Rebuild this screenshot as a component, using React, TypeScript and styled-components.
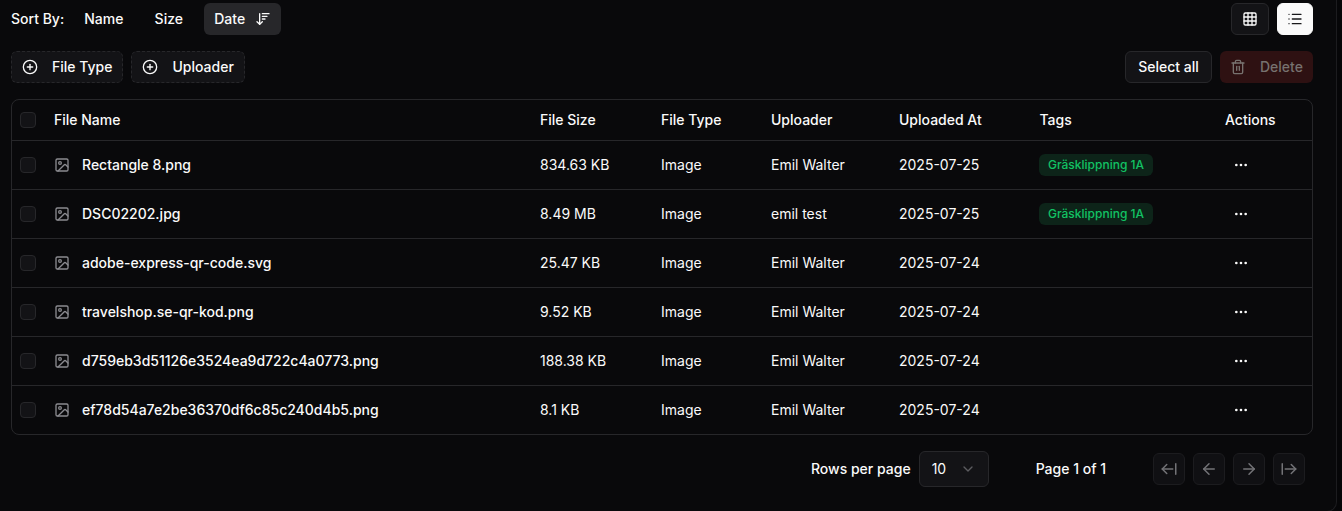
import React from "react"
import styled, { createGlobalStyle } from "styled-components"
import {
  ArrowDownWideNarrow,
  ArrowLeft,
  ArrowLeftFromLine,
  ArrowRight,
  ArrowRightFromLine,
  ChevronDown,
  CirclePlus,
  Ellipsis,
  Grid3x3,
  Image,
  List,
  Trash2,
} from "lucide-react"

const files = [
  { name: "Rectangle 8.png", size: "834.63 KB", uploader: "Emil Walter", date: "2025-07-25", tag: "Gräsklippning 1A" },
  { name: "DSC02202.jpg", size: "8.49 MB", uploader: "emil test", date: "2025-07-25", tag: "Gräsklippning 1A" },
  { name: "adobe-express-qr-code.svg", size: "25.47 KB", uploader: "Emil Walter", date: "2025-07-24" },
  { name: "travelshop.se-qr-kod.png", size: "9.52 KB", uploader: "Emil Walter", date: "2025-07-24" },
  { name: "d759eb3d51126e3524ea9d722c4a0773.png", size: "188.38 KB", uploader: "Emil Walter", date: "2025-07-24" },
  { name: "ef78d54a7e2be36370df6c85c240d4b5.png", size: "8.1 KB", uploader: "Emil Walter", date: "2025-07-24" },
]

const App = () => {
  return (
    <Page>
      <GlobalStyle />
      <Panel>
        <TopBar>
          <SortGroup>
            <SortLabel>Sort By:</SortLabel>
            <SortButton>Name</SortButton>
            <SortButton>Size</SortButton>
            <SortButton $active>
              Date
              <ArrowDownWideNarrow size={16} />
            </SortButton>
          </SortGroup>
          <ViewGroup>
            <ViewButton>
              <Grid3x3 size={16} />
            </ViewButton>
            <ViewButton $active>
              <List size={16} />
            </ViewButton>
          </ViewGroup>
        </TopBar>

        <FilterBar>
          <FilterGroup>
            <FilterButton>
              <CirclePlus size={16} />
              File Type
            </FilterButton>
            <FilterButton>
              <CirclePlus size={16} />
              Uploader
            </FilterButton>
          </FilterGroup>
          <FilterGroup>
            <SelectAllButton>Select all</SelectAllButton>
            <DeleteButton>
              <Trash2 size={16} />
              Delete
            </DeleteButton>
          </FilterGroup>
        </FilterBar>

        <Table>
          <HeaderRow>
            <CheckCell>
              <Checkbox />
            </CheckCell>
            <span>File Name</span>
            <span>File Size</span>
            <span>File Type</span>
            <span>Uploader</span>
            <span>Uploaded At</span>
            <span>Tags</span>
            <span>Actions</span>
          </HeaderRow>
          {files.map((file) => (
            <BodyRow key={file.name}>
              <CheckCell>
                <Checkbox />
              </CheckCell>
              <NameCell>
                <Image size={16} />
                {file.name}
              </NameCell>
              <Cell>{file.size}</Cell>
              <Cell>Image</Cell>
              <Cell>{file.uploader}</Cell>
              <Cell>{file.date}</Cell>
              <Cell>{file.tag && <Tag>{file.tag}</Tag>}</Cell>
              <ActionCell>
                <Ellipsis size={16} />
              </ActionCell>
            </BodyRow>
          ))}
        </Table>

        <Footer>
          <FooterLabel>Rows per page</FooterLabel>
          <RowsSelect>
            10
            <ChevronDown size={16} />
          </RowsSelect>
          <PageText>Page 1 of 1</PageText>
          <PagerGroup>
            <PagerButton>
              <ArrowLeftFromLine size={18} />
            </PagerButton>
            <PagerButton>
              <ArrowLeft size={18} />
            </PagerButton>
            <PagerButton>
              <ArrowRight size={18} />
            </PagerButton>
            <PagerButton>
              <ArrowRightFromLine size={18} />
            </PagerButton>
          </PagerGroup>
        </Footer>
      </Panel>
    </Page>
  )
}

const GlobalStyle = createGlobalStyle`
  html, body {
    margin: 0;
    background: #060608;
    overflow: hidden;
  }
  * {
    box-sizing: border-box;
  }
`
const Page = styled.div`
  width: 1342px;
  height: 511px;
  overflow: hidden;
  font-family: "Inter", sans-serif;
  font-size: 14px;
  line-height: 20px;
  font-weight: 500;
  color: #fafafa;
`
const Panel = styled.div`
  width: 1337px;
  height: 512px;
  padding: 3px 23px 0 11px;
  background: #09090b;
  border-right: 1px solid #1c1c1f;
  border-bottom: 1px solid #1c1c1f;
  border-bottom-right-radius: 10px;
`
const TopBar = styled.div`
  display: flex;
  justify-content: space-between;
  align-items: center;
  height: 32px;
`
const SortGroup = styled.div`
  display: flex;
  align-items: center;
  gap: 11.25px;
`
const SortLabel = styled.span`
  margin-right: -1.25px;
`
const SortButton = styled.button<{ $active?: boolean }>`
  display: flex;
  align-items: center;
  gap: 10px;
  height: 32px;
  padding: 0 10px;
  border: 0;
  border-radius: 6px;
  background: ${(p) => (p.$active ? "#27272a" : "transparent")};
  color: inherit;
  font: inherit;
`
const ViewGroup = styled.div`
  display: flex;
  gap: 8px;
`
const ViewButton = styled.button<{ $active?: boolean }>`
  display: flex;
  align-items: center;
  justify-content: center;
  width: ${(p) => (p.$active ? "36px" : "38px")};
  height: 32px;
  padding: 0;
  border: 1px solid ${(p) => (p.$active ? "#fafafa" : "#27272a")};
  border-radius: 6px;
  background: ${(p) => (p.$active ? "#fafafa" : "#131316")};
  color: ${(p) => (p.$active ? "#18181b" : "#fafafa")};
`
const FilterBar = styled.div`
  display: flex;
  justify-content: space-between;
  align-items: center;
  height: 32px;
  margin-top: 16px;
`
const FilterGroup = styled.div`
  display: flex;
  gap: 8px;
`
const FilterButton = styled.button`
  display: flex;
  align-items: center;
  gap: 14px;
  height: 32px;
  padding: 0 10px;
  border: 1px dashed #27272a;
  border-radius: 6px;
  background: #131316;
  color: inherit;
  font: inherit;
`
const SelectAllButton = styled.button`
  height: 32px;
  width: 87px;
  padding: 0;
  border: 1px solid #27272a;
  border-radius: 6px;
  background: #131316;
  color: inherit;
  font: inherit;
`
const DeleteButton = styled.button`
  display: flex;
  align-items: center;
  gap: 14px;
  width: 93px;
  height: 32px;
  padding: 0 0 0 10px;
  border: 0;
  border-radius: 6px;
  background: #2e1112;
  color: #77726f;
  font: inherit;
`
const Table = styled.div`
  margin-top: 16px;
  width: 1302px;
  border: 1px solid #27272a;
  border-radius: 8px;
`
const columns = "42px 486px 121px 110px 128px 140.5px 185.5px 1fr"

const HeaderRow = styled.div`
  display: grid;
  grid-template-columns: ${columns};
  align-items: center;
  height: 40px;
`
const BodyRow = styled.div`
  display: grid;
  grid-template-columns: ${columns};
  align-items: center;
  height: 49px;
  border-top: 1px solid #27272a;
`
const CheckCell = styled.div`
  display: flex;
  padding-left: 8px;
`
const Checkbox = styled.span`
  width: 16px;
  height: 16px;
  border: 1px solid #27272a;
  border-radius: 4px;
  background: #131316;
`
const Cell = styled.div`
  font-weight: 400;
`
const NameCell = styled.div`
  display: flex;
  align-items: center;
  gap: 12px;
  svg {
    color: #8b8b90;
  }
`
const Tag = styled.span`
  display: inline-flex;
  align-items: center;
  height: 22px;
  margin-left: -0.5px;
  padding: 0 9px;
  border-radius: 6px;
  background: #0d2419;
  color: #12c264;
  font-size: 12px;
  font-weight: 500;
`
const ActionCell = styled.div`
  display: flex;
  padding-left: 7.5px;
`
const Footer = styled.div`
  display: flex;
  align-items: center;
  justify-content: flex-end;
  width: 1302px;
  height: 36px;
  margin-top: 16px;
  padding-right: 8px;
`
const FooterLabel = styled.span`
  margin-right: 8px;
`
const RowsSelect = styled.div`
  display: flex;
  align-items: center;
  justify-content: space-between;
  width: 70px;
  height: 36px;
  padding: 0 12px;
  border: 1px solid #27272a;
  border-radius: 6px;
  background: #131316;
  font-weight: 400;
  svg {
    color: #5c5c60;
  }
`
const PageText = styled.span`
  margin: 0 47px 0 47px;
`
const PagerGroup = styled.div`
  display: flex;
  gap: 8px;
`
const PagerButton = styled.button`
  display: flex;
  align-items: center;
  justify-content: center;
  width: 32px;
  height: 32px;
  padding: 0;
  border: 1px solid #1c1c1f;
  border-radius: 6px;
  background: #101013;
  color: #737377;
`
export default App
